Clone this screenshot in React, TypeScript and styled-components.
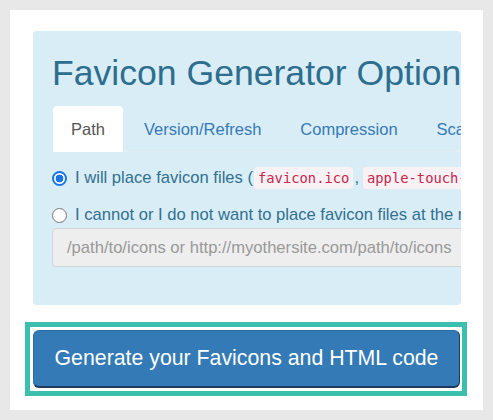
import React from "react";
import styled, { createGlobalStyle } from "styled-components";

const Global = createGlobalStyle`
  html, body { margin: 0; padding: 0; background: #e8e8e8; }
  body { font-family: "Liberation Sans", Arial, sans-serif; }
`;

const Page = styled.div`
  padding: 10px;
  width: 473px;
`;

const Card = styled.div`
  background: #ffffff;
  height: 400px;
  box-sizing: border-box;
  padding: 21px 16px 0 15px;
  display: flex;
  flex-direction: column;
`;

const Panel = styled.div`
  margin-left: 8px;
  width: 428px;
  height: 274px;
  box-sizing: border-box;
  background: #d9edf7;
  border-radius: 4px;
  overflow: hidden;
  padding: 22px 0 0 19px;
  color: #31708f;
`;

const Inner = styled.div`
  width: 700px;
`;

const Title = styled.h1`
  margin: 0 0 13px;
  font-size: 35.6px;
  font-weight: 400;
  line-height: 40px;
  color: #2d6e8e;
  white-space: nowrap;
`;

const Tabs = styled.div`
  display: flex;
  border-bottom: 1px solid #e4eff5;
  margin-left: 1px;
`;

const Tab = styled.div<{ $active?: boolean }>`
  padding: 0 18px;
  height: 46px;
  display: flex;
  align-items: center;
  margin-right: 3px;
  font-size: 16.5px;
  border-radius: 4px 4px 0 0;
  background: ${(p) => (p.$active ? "#ffffff" : "transparent")};
  color: ${(p) => (p.$active ? "#555555" : "#3579b6")};
  margin-bottom: -1px;
`;

const Options = styled.div`
  padding-top: 15px;
  display: flex;
  flex-direction: column;
`;

const Row = styled.label`
  display: flex;
  align-items: center;
  height: 22px;
  font-size: 16.6px;
  white-space: nowrap;
  margin-bottom: 15px;
  &:last-of-type { margin-bottom: 2px; }
`;

const Radio = styled.input`
  appearance: none;
  -webkit-appearance: none;
  width: 15px;
  height: 15px;
  margin: 0 8px 0 0;
  border-radius: 50%;
  border: 1px solid #767676;
  background: #ffffff;
  box-sizing: border-box;
  flex: none;
  &:checked {
    border: 2px solid #1a73e8;
    background: radial-gradient(circle, #1a73e8 0 3.6px, #ffffff 4.2px);
  }
`;

const Code = styled.code`
  font-family: "DejaVu Sans Mono", "Liberation Mono", monospace;
  font-size: 13.8px;
  color: #c7254e;
  background: #f9f2f4;
  border-radius: 4px;
  padding: 3px 4px;
  margin: 0 1px;
  & + span { margin-right: 3px; }
`;

const Sep = styled.span``;

export const PathInput = styled.input`
  width: 500px;
  height: 39px;
  box-sizing: border-box;
  border: 1px solid #cfd5d8;
  border-radius: 4px;
  background: #eeeeee;
  padding: 0 14px;
  font-family: "Liberation Sans", Arial, sans-serif;
  font-size: 16.6px;
  &::placeholder { color: #999999; }
`;

const Frame = styled.div`
  margin-top: 17px;
  width: 442px;
  box-sizing: border-box;
  border: 5px solid #3cbfae;
  padding: 3px;
  background: #ffffff;
`;

const Button = styled.button`
  display: block;
  width: 427px;
  height: 58px;
  box-sizing: border-box;
  background: #337ab7;
  color: #ffffff;
  border: 1px solid #2e6da4;
  border-right-color: #1c3a5c;
  border-bottom: 2px solid #1c3a5c;
  border-radius: 6px;
  font-family: "Liberation Sans", Arial, sans-serif;
  font-size: 21.3px;
  padding: 0;
`;

export default function App() {
  return (
    <>
      <Global />
      <Page>
        <Card>
          <Panel>
            <Inner>
              <Title>Favicon Generator Options</Title>
              <Tabs>
                <Tab $active>Path</Tab>
                <Tab>Version/Refresh</Tab>
                <Tab>Compression</Tab>
                <Tab>Scaling algorithm</Tab>
              </Tabs>
              <Options>
                <Row>
                  <Radio type="radio" name="p" defaultChecked />
                  I will place favicon files (<Code>favicon.ico</Code><Sep>,</Sep>
                  <Code>apple-touch-icon.png</Code>, etc.) at the root of my web site.
                </Row>
                <Row>
                  <Radio type="radio" name="p" />
                  I cannot or I do not want to place favicon files at the root of my web site.
                </Row>
                <PathInput disabled placeholder="/path/to/icons or http://myothersite.com/path/to/icons" />
              </Options>
            </Inner>
          </Panel>
          <Frame>
            <Button>Generate your Favicons and HTML code</Button>
          </Frame>
        </Card>
      </Page>
    </>
  );
}
